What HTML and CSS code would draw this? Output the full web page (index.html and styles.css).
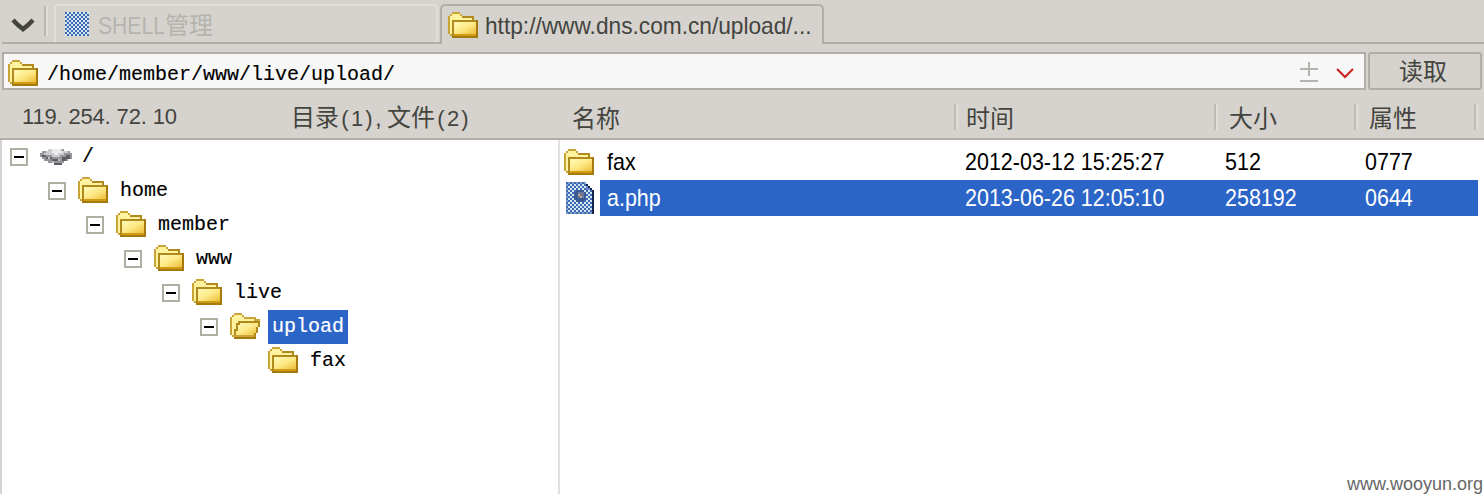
FILE: index.html
```html
<!DOCTYPE html>
<html lang="zh-CN">
<head>
<meta charset="utf-8">
<title>File manager</title>
<link rel="stylesheet" href="styles.css">
</head>
<body>
<svg class="defs" aria-hidden="true">
  <defs>
    <linearGradient id="gold" x1="0" y1="0" x2="1" y2="1">
      <stop offset="0" stop-color="#fff9b8"/><stop offset=".5" stop-color="#fde987"/><stop offset="1" stop-color="#ecbd38"/>
    </linearGradient>
    <pattern id="check" width="4" height="4" patternUnits="userSpaceOnUse">
      <rect width="4" height="4" fill="#d5e6f2"/><path d="M0 0h2v2H0zM2 2h2v2H2z" fill="#3c6ab4"/>
    </pattern>
    <symbol id="folder" viewBox="0 0 30 26">
      <path d="M2 2h2V0h8v2h2v2h12v4h4v18H4v-2H2v-2H0V4h2z" fill="#c9a436"/>
      <path d="M4 2h8v2h2v2h10v2H4v14H2V4h2z" fill="#fff3a0"/>
      <path d="M6 10h22v12H6z" fill="url(#gold)"/>
      <path d="M4 8h26v2H6v14H4z" fill="#b08a1c"/>
      <path d="M14 4h12v4h-2V6H14z" fill="#b08a1c"/>
      <path d="M28 8h2v18H4v-2h24z" fill="#a57a0c"/>
      <path d="M6 22h22v2H6z" fill="#cf9c14"/>
    </symbol>
    <symbol id="folder-open" viewBox="0 0 30 26">
      <path d="M2 2h2V0h8v2h2v2h12v2h4v8h-2v6h-2v6H4v-2H2v-2H0V4h2z" fill="#c9a436"/>
      <path d="M4 2h8v2h2v2h10v2H8v2H6v6H4v6H2V4h2z" fill="#fff3a0"/>
      <path d="M10 10h18v4h-2v6h-2v2H6v-4h2v-6h2z" fill="url(#gold)"/>
      <path d="M8 8h22v2H10v2H8v6H6v4H4v-6h2v-6h2zM28 10h2v4h-2v6h-2v4h-2v-4h2v-6h2z" fill="#b08a1c"/>
      <path d="M4 24h22v2H4z" fill="#a57a0c"/>
    </symbol>
  </defs>
</svg>

<div class="app">
  <nav class="tabs">
    <div class="tab-menu"><svg width="24" height="14" viewBox="0 0 24 14"><path d="M2 2l5 5 5 4 5-4 5-5" fill="none" stroke="#44443f" stroke-width="4.5"/></svg></div>
    <div class="tab tab-idle"><svg width="24" height="24"><rect width="24" height="24" fill="url(#check)" shape-rendering="crispEdges"/></svg><span class="idle-text"><span class="shell">SHELL</span>管理</span></div>
    <div class="tab tab-active"><svg class="folder"><use href="#folder"/></svg><span class="url-text">http://www.dns.com.cn/upload/...</span></div>
    <div class="tab-rest"></div>
  </nav>

  <div class="address">
    <div class="path-box">
      <svg class="folder"><use href="#folder"/></svg>
      <span class="path mono">/home/member/www/live/upload/</span>
      <svg class="plus" width="18" height="20" viewBox="0 0 18 20"><path d="M0 7h18M9 0v14M0 19h18" stroke="#b5b3ae" stroke-width="2"/></svg>
      <svg class="drop" width="18" height="12" viewBox="0 0 18 12"><path d="M1 1l8 8 8-8" fill="none" stroke="#c8201c" stroke-width="2"/></svg>
    </div>
    <button class="read">读取</button>
  </div>

  <div class="heads">
    <div class="tree-head">
      <span class="ip">119<i>.</i>254<i>.</i>72<i>.</i>10</span>
      <span class="counts">目录<b>(</b><b>1</b><b>)</b><i>,</i>文件<b>(</b><b>2</b><b>)</b></span>
    </div>
    <div class="col name">名称</div>
    <div class="col time">时间</div>
    <div class="col size">大小</div>
    <div class="col attr">属性</div>
  </div>

  <main class="panes">
    <section class="tree mono">
      <div class="node d0"><span class="toggle"></span>
        <svg class="drive" width="32" height="20" viewBox="0 0 16 10" shape-rendering="crispEdges"><path d="M4 1h8v1h3v1h1v3h-2v1h-2v1h-1v1H7V8H4V7H2V6H1V5H0V3h1V2h3z" fill="#96969a"/><path d="M4 1h7v1h3v1h-2v1h-2v1H6V4H2V3h1V2h1z" fill="#cdcdd0"/><path d="M6 1h4v1h1v1H9v1H7V3H6z" fill="#ececef"/><path d="M1 4h2v1h3v1h3v1H6V6H3V5H1zM11 5h2V4h2v2h-2v1h-2zM7 8h4v1H7z" fill="#5c5c62"/><path d="M4 5h1v1H4zM9 6h1v1H9zM6 7h1v1H6z" fill="#c2c2c6"/></svg>
        <span class="label">/</span></div>
      <div class="node d1"><span class="toggle"></span><svg class="folder"><use href="#folder"/></svg><span class="label">home</span></div>
      <div class="node d2"><span class="toggle"></span><svg class="folder"><use href="#folder"/></svg><span class="label">member</span></div>
      <div class="node d3"><span class="toggle"></span><svg class="folder"><use href="#folder"/></svg><span class="label">www</span></div>
      <div class="node d4"><span class="toggle"></span><svg class="folder"><use href="#folder"/></svg><span class="label">live</span></div>
      <div class="node d5"><span class="toggle"></span><svg class="folder"><use href="#folder-open"/></svg><span class="label selected">upload</span></div>
      <div class="node d6"><svg class="folder"><use href="#folder"/></svg><span class="label">fax</span></div>
    </section>
    <section class="files">
      <div class="file">
        <svg class="folder"><use href="#folder"/></svg>
        <div class="cells"><span class="c-name"><span class="t">fax</span></span><span class="c-time"><span class="t">2012-03-12 15:25:27</span></span><span class="c-size"><span class="t">512</span></span><span class="c-attr"><span class="t">0777</span></span></div>
      </div>
      <div class="file">
        <svg class="doc" width="28" height="32" viewBox="0 0 28 32" shape-rendering="crispEdges"><path d="M0 0h20v2h2v2h2v2h2v2h2v24H0z" fill="url(#check)"/><path d="M0 0h20v2H0zM0 30h28v2H0zM0 0h2v32H0z" fill="#3c6ab4" opacity=".6"/><path d="M20 0v8h6V6h-2V4h-2V2h-2z" fill="#5f86c0"/><path d="M26 8h2v24h-2zM20 2h2v2h2v2h2v2h-2V6h-2V4h-2z" fill="#14264c"/><path d="M10 8h8v2h2v8h-2v2h-8v-2H8v-8h2z" fill="#3a5b96"/><path d="M12 10h6v6h-6z" fill="#6c7894"/><path d="M12 12h2v2h2v2h-2v-2h-2z" fill="#c7ab90"/></svg>
        <div class="cells picked"><span class="c-name"><span class="t">a.php</span></span><span class="c-time"><span class="t">2013-06-26 12:05:10</span></span><span class="c-size"><span class="t">258192</span></span><span class="c-attr"><span class="t">0644</span></span></div>
      </div>
      <footer class="site">www.wooyun.org</footer>
    </section>
  </main>
</div>
</body>
</html>
```
FILE: styles.css
```css
* { box-sizing: border-box; }
body { margin: 0; background: #d6d3ce; color: #44443f; font: 24px/36px "Liberation Sans", "Noto Sans CJK SC", sans-serif; }
.defs { display: block; width: 0; height: 0; }
svg { display: block; flex: none; }
i, b { font-style: normal; font-weight: normal; }
.app { display: flex; flex-direction: column; width: 1484px; height: 494px; overflow: hidden; }
.folder { width: 30px; height: 26px; shape-rendering: crispEdges; }
.mono { font: 20px/34px "Liberation Mono", monospace; color: #000; -webkit-text-stroke: .15px; }

.tabs { display: flex; height: 44px; padding: 4px 0 0 2px; }
.tab-menu { width: 52px; border-bottom: 2px solid #b1aea9; padding: 14px 0 0 9px; background: linear-gradient(90deg, #b9b6b1 50%, #e3ddd6 50%) 42px 2px / 4px 30px no-repeat; }
.tab { display: flex; white-space: nowrap; }
.tab-idle { width: 386px; border-bottom: 2px solid #b1aea9; padding: 8px 0 0 11px; gap: 9px; color: #b5b3ae; background:
  linear-gradient(#e3ddd6, #e3ddd6) 2px 0 / 380px 2px no-repeat,
  linear-gradient(#e3ddd6, #e3ddd6) 0 2px / 2px 36px no-repeat,
  linear-gradient(#e3ddd6, #e3ddd6) 382px 2px / 2px 36px no-repeat; }
.idle-text { line-height: 28px; }
.shell { display: inline-block; width: 67px; transform: scaleX(.88); transform-origin: 0 50%; }
.tab-active { width: 384px; height: 40px; border: 2px solid #b1aea9; border-bottom: 0; border-radius: 5px 5px 0 0; padding: 6px 0 0 6px; gap: 7px; }
.url-text { line-height: 28px; transform: scaleX(.945); transform-origin: 0 50%; }
.tab-rest { flex: 1; border-bottom: 2px solid #b1aea9; }

.address { display: flex; height: 46px; padding: 8px 2px 0; gap: 2px; }
.path-box { display: flex; width: 1364px; height: 38px; border: 2px solid #b1aea9; background: #f7f7f7; padding: 0 10px 0 4px; }
.path-box .folder { margin-top: 6px; }
.path { flex: 1; padding: 4px 0 0 9px; }
.plus { margin: 8px 18px 0 0; }
.drop { margin-top: 14px; }
.read { width: 114px; height: 38px; border: 2px solid #b1aea9; border-radius: 3px; background: transparent; padding: 0 4px 2px 0; color: #44443f; font: 24px/32px "Noto Sans CJK SC", sans-serif; }

.heads { display: flex; height: 50px; padding-left: 2px; border-bottom: 2px solid #b1aea9; white-space: nowrap; }
.tree-head { display: flex; width: 558px; padding: 9px 0 0 20px; }
.ip { width: 269px; font-size: 22px; letter-spacing: -.2px; }
.ip i { display: inline-block; width: 12px; }
.counts { padding-top: 1px; font-size: 24px; }
.counts b { display: inline-block; width: 12px; text-align: center; font-size: 22px; }
.counts i { display: inline-block; width: 12px; }
.col { padding: 11px 0 0 12px; background: linear-gradient(90deg, #bebbb6 50%, #e3ddd6 50%) right 14px / 4px 26px no-repeat; }
.name { width: 398px; }
.time { width: 260px; padding-left: 8px; }
.size { width: 140px; padding-left: 11px; }
.attr { width: 120px; padding-left: 11px; }

.panes { display: flex; flex: 1; padding-left: 2px; }
.tree { width: 558px; background: #fff; border-right: 2px solid #e3e1dd; }
.node { display: flex; align-items: center; height: 34px; }
.toggle { width: 18px; height: 18px; margin-right: 12px; border: 2px solid #b0aea2; background: linear-gradient(#000, #000) center / 10px 2px no-repeat; }
.node .folder { margin: -3px 0 0; }
.label { margin-left: 8px; padding: 0 4px; }
.drive { margin-right: -2px; }
.selected { background: #2c65c8; color: #fff; }
.d0 { padding-left: 8px; }
.d1 { padding-left: 46px; }
.d2 { padding-left: 84px; }
.d3 { padding-left: 122px; }
.d4 { padding-left: 160px; }
.d5 { padding-left: 198px; }
.d6 { padding-left: 266px; }

.files { display: flex; flex-direction: column; flex: 1; background: #fff; padding-top: 4px; color: #000; }
.file { display: flex; align-items: center; height: 36px; padding-left: 4px; }
.file .doc { margin: 0 2px; }
.file .folder { margin-right: 2px; }
.cells { display: flex; width: 878px; height: 36px; margin-left: 4px; white-space: nowrap; }
.picked { background: #2c65c8; color: #fff; }
.c-name { width: 358px; padding-left: 7px; }
.c-time { width: 260px; padding-left: 7px; }
.c-size { width: 140px; padding-left: 7px; }
.c-attr { padding-left: 7px; }
.t { display: inline-block; transform: scaleX(.895); transform-origin: 0 50%; }
.site { margin: auto 1px 0 auto; font-size: 18px; line-height: 20px; color: #666; }
```
